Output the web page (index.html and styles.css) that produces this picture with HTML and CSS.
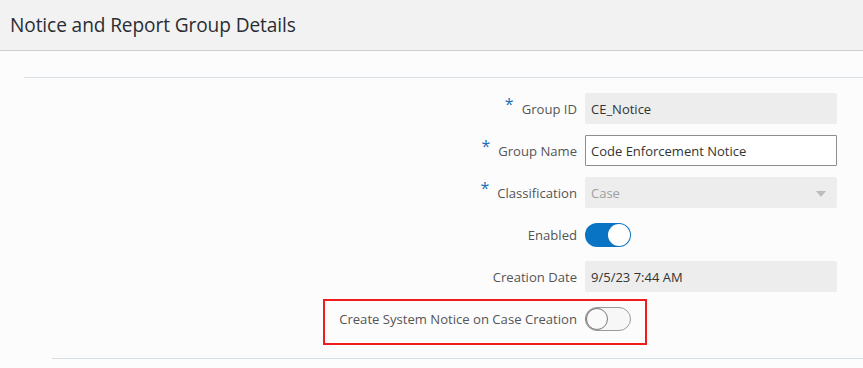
FILE: index.html
```html
<!DOCTYPE html>
<html lang="en">
<head>
<meta charset="utf-8">
<title>Notice and Report Group Details</title>
<link rel="stylesheet" href="styles.css">
</head>
<body>
<header class="page-header">
  <h1 class="page-title">Notice and Report Group Details</h1>
</header>
<main class="content">
  <section class="details">
    <div class="form">
      <div class="label"><span class="req">*</span>Group ID</div>
      <div class="field readonly">CE_Notice</div>

      <div class="label"><span class="req">*</span>Group Name</div>
      <div class="field input">Code Enforcement Notice</div>

      <div class="label"><span class="req">*</span>Classification</div>
      <div class="field readonly select"><span class="muted">Case</span><span class="caret"></span></div>

      <div class="label">Enabled</div>
      <div class="toggle-cell"><span class="switch on"><span class="knob"></span></span></div>

      <div class="label">Creation Date</div>
      <div class="field readonly">9/5/23 7:44 AM</div>

      <div class="label">Create System Notice on Case Creation</div>
      <div class="toggle-cell"><span class="switch off"><span class="knob"></span></span></div>

      <div class="highlight"></div>
    </div>
  </section>
  <div class="bottom-rule"></div>
</main>
</body>
</html>
```
FILE: styles.css
```css
html, body {
  margin: 0;
  padding: 0;
}
body {
  background: #fcfcfc;
  font-family: "Open Sans", "Noto Sans", "Liberation Sans", sans-serif;
  color: #333;
  width: 863px;
  height: 368px;
  overflow: hidden;
}
.page-header {
  height: 51px;
  box-sizing: border-box;
  background: #f2f2f2;
  border-bottom: 1px solid #cfcfcf;
  display: flex;
  align-items: center;
  padding-left: 10px;
}
.page-title {
  margin: 0;
  font-weight: 400;
  font-size: 19.1px;
  color: #2a2d33;
  letter-spacing: -0.1px;
}
.content {
  padding-top: 26px;
}
.details {
  margin-left: 24px;
  border-top: 1px solid #d7dfe6;
}
.form {
  position: relative;
  display: grid;
  grid-template-columns: 553px 252px;
  grid-auto-rows: 31px;
  column-gap: 8px;
  row-gap: 11px;
  padding: 15px 0 24px;
}
.label {
  display: flex;
  align-items: center;
  justify-content: flex-end;
  font-size: 13.1px;
  color: #555;
  white-space: nowrap;
}
.req {
  color: #1b6fb8;
  font-size: 16px;
  align-self: flex-start;
  margin-top: 3px;
  margin-right: 8px;
  line-height: 1;
}
.field {
  box-sizing: border-box;
  display: flex;
  align-items: center;
  padding-left: 6px;
  font-size: 13px;
  color: #333;
}
.readonly {
  background: #ededed;
  border-radius: 2px;
}
.input {
  background: #fff;
  border: 1px solid #8d8d8d;
  padding-left: 5px;
  border-radius: 1px;
}
.select {
  justify-content: space-between;
  padding-right: 11px;
}
.muted {
  color: #9e9e9e;
}
.caret {
  width: 0;
  height: 0;
  border-left: 5px solid transparent;
  border-right: 5px solid transparent;
  border-top: 6px solid #bdbdbd;
  margin-top: 2px;
}
.toggle-cell {
  display: flex;
  align-items: center;
}
.switch {
  position: relative;
  box-sizing: border-box;
  width: 46px;
  height: 24px;
  border-radius: 12px;
  display: block;
}
.switch.on {
  background: #0a74c4;
}
.switch.off {
  background: #f7f7f7;
  border: 1px solid #9a9a9a;
}
.knob {
  position: absolute;
  top: 1px;
  width: 22px;
  height: 22px;
  border-radius: 50%;
  background: #fff;
  box-sizing: border-box;
}
.switch.on .knob {
  right: 1px;
}
.switch.off .knob {
  top: 0;
  left: 0;
  width: 22px;
  height: 22px;
  background: #fafafa;
  border: 1.5px solid #7d7d7d;
  box-shadow: -1px 0 1px rgba(0,0,0,0.15);
}
.highlight {
  position: absolute;
  left: 299px;
  top: 221px;
  width: 324px;
  height: 46px;
  box-sizing: border-box;
  border: 2px solid #f01c1c;
  pointer-events: none;
}
.bottom-rule {
  margin-left: 52px;
  border-top: 1px solid #d7dfe6;
}
```
